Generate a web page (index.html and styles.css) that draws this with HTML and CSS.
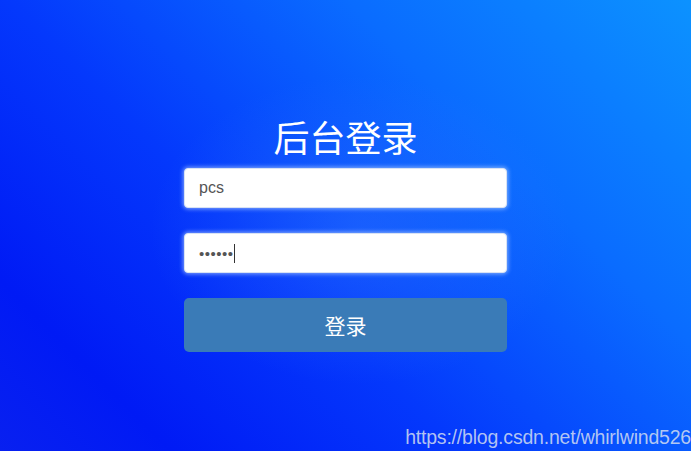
FILE: index.html
```html
<!DOCTYPE html>
<html lang="zh">
<head>
<meta charset="utf-8">
<title>后台登录</title>
<link rel="stylesheet" href="styles.css">
</head>
<body>
<div class="page">
  <div class="login">
    <h1 class="title">后台登录</h1>
    <form class="form">
      <div class="field"><input class="input" type="text" value="pcs"></div>
      <div class="field"><input class="input" type="password" value="123456"><span class="caret"></span></div>
      <button class="btn" type="button">登录</button>
    </form>
  </div>
  <div class="watermark">https://blog.csdn.net/whirlwind526</div>
</div>
</body>
</html>
```
FILE: styles.css
```css
html, body {
  margin: 0;
  padding: 0;
  height: 100%;
}
body {
  font-family: "Liberation Sans", "Noto Sans CJK SC", sans-serif;
  overflow: hidden;
}
.page {
  position: relative;
  width: 100%;
  height: 451px;
  background:
    radial-gradient(ellipse 300px 220px at 360px 230px, rgba(60,130,255,0.35), rgba(60,130,255,0) 70%),
    linear-gradient(225deg, #0c92ff 0%, #0a6cff 30%, #0438fc 60%, #001af5 85%, #0820f0 100%);
  display: flex;
  flex-direction: column;
  align-items: center;
}
.login {
  width: 323px;
  margin-top: 113px;
  display: flex;
  flex-direction: column;
}
.title {
  margin: 0;
  font-family: "Noto Sans CJK SC", sans-serif;
  font-weight: 400;
  font-size: 36px;
  line-height: 46px;
  color: #fff;
  text-align: center;
  letter-spacing: 0;
}
.form {
  margin: 9px 0 0;
  display: flex;
  flex-direction: column;
  gap: 25px;
}
.field {
  position: relative;
  height: 40px;
}
.input {
  box-sizing: border-box;
  width: 100%;
  height: 40px;
  margin: 0;
  padding: 0 14px;
  border: 1px solid #d8e2f4;
  border-radius: 4px;
  background: #fff;
  box-shadow: 0 0 4px 1px rgba(180,210,255,0.7);
  font-family: "Liberation Sans", sans-serif;
  font-size: 16px;
  color: #555;
  outline: none;
}
.input[type="password"] {
  font-size: 15px;
  letter-spacing: 0.5px;
}
.caret {
  position: absolute;
  left: 50px;
  top: 11px;
  width: 1px;
  height: 19px;
  background: #333;
}
.btn {
  height: 54px;
  margin: 0;
  border: none;
  border-radius: 5px;
  background: #3a7bb7;
  color: #fff;
  font-family: "Noto Sans CJK SC", sans-serif;
  font-size: 21px;
  cursor: pointer;
}
.watermark {
  position: absolute;
  right: 0;
  bottom: 2px;
  font-family: "Liberation Sans", sans-serif;
  font-size: 19.5px;
  letter-spacing: -0.2px;
  color: rgba(210,220,240,0.85);
}
```
